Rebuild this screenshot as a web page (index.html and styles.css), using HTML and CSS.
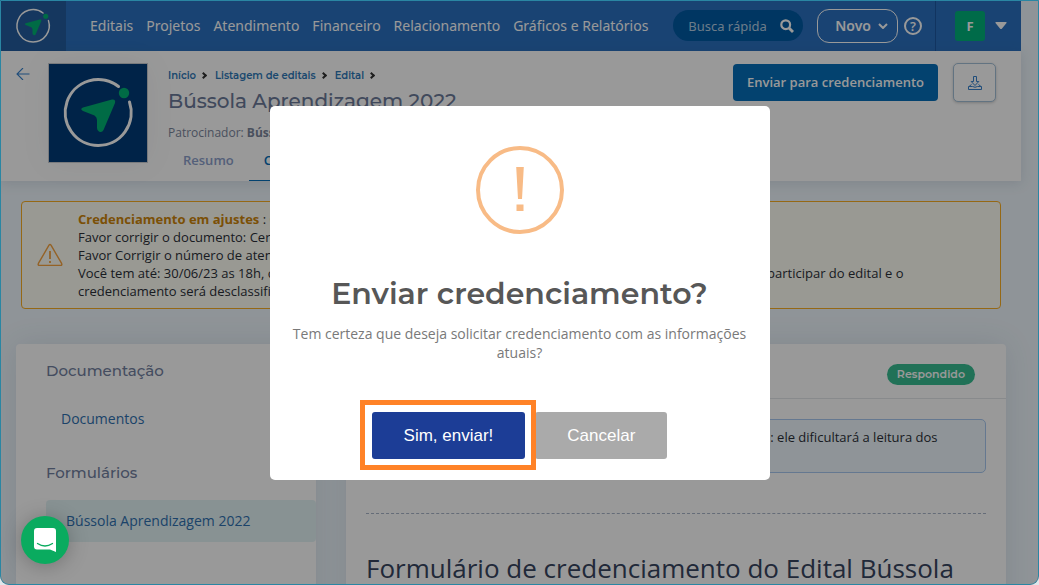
FILE: index.html
```
<!DOCTYPE html>
<html lang="pt-BR">
<head>
  <meta charset="UTF-8">
  <meta name="viewport" content="width=device-width, initial-scale=1">
  <title>Bússola Aprendizagem 2022</title>
  <link rel="stylesheet" href="styles.css">
</head>
<body>
  <!-- Shared logo -->
  <svg class="sprite" aria-hidden="true">
    <symbol id="logo" viewBox="0 0 98 98">
      <path d="M80.500 38A33 33 0 1 1 69.500 22.500" fill="none" stroke="#fff" stroke-width="3" stroke-linecap="round"/>
      <circle cx="75" cy="29" r="5.200" fill="#00b273"/>
      <path d="M34 43.500 63 35.500Q67 35 66 39L54.500 66Q53 69 50 67.500 48 66.500 48 64V56Q48 53 45.500 51.500L34 47Q30.500 45 34 43.500Z" fill="#00b273"/>
    </symbol>
  </svg>

  <div class="app">
    <!-- Navbar -->
    <nav class="navbar">
      <a href="#" class="brand" aria-label="Início"><svg width="48" height="48"><use href="#logo"/></svg></a>
      <div class="nav-links">
        <a href="#">Editais</a>
        <a href="#">Projetos</a>
        <a href="#">Atendimento</a>
        <a href="#">Financeiro</a>
        <a href="#">Relacionamento</a>
        <a href="#">Gráficos e Relatórios</a>
      </div>
      <div class="nav-tools">
        <div class="search">
          <input type="text" placeholder="Busca rápida" aria-label="Busca rápida">
          <svg width="14" height="14" viewBox="0 0 14 14" fill="none" stroke="#fff"><circle cx="5.700" cy="5.700" r="4.400" stroke-width="2.200"/><path d="M9 9l4 4" stroke-width="2.800"/></svg>
        </div>
        <button class="btn-new">Novo
          <svg width="10" height="6" viewBox="0 0 10 6" fill="none" stroke="#fff" stroke-width="2"><path d="M1 1l4 4 4-4"/></svg>
        </button>
        <button class="btn-help" aria-label="Ajuda">?</button>
      </div>
      <button class="user">
        <span class="avatar">F</span>
        <svg width="12" height="7" viewBox="0 0 12 7"><path d="M1 0h10q1 0 .5 1L7 6.500q-1 1-2 0L.5 1Q0 0 1 0z" fill="#fff"/></svg>
      </button>
    </nav>

    <!-- Page header -->
    <header class="page-header">
      <a href="#" class="back" aria-label="Voltar">
        <svg width="14" height="12" viewBox="0 0 14 12" fill="none" stroke="#3782cd" stroke-width="1.100"><path d="M13.500 6H1M7 0L1 6l6 6"/></svg>
      </a>
      <div class="cover"><svg width="98" height="98"><use href="#logo"/></svg></div>
      <div class="heading">
        <div class="breadcrumb">
          <a href="#">Início</a><i></i>
          <a href="#">Listagem de editais</a><i></i>
          <a href="#">Edital</a><i></i>
        </div>
        <h1>Bússola Aprendizagem 2022</h1>
        <p class="sponsor">Patrocinador: <b>Bússola Social</b></p>
        <div class="tabs">
          <a href="#">Resumo</a>
          <a href="#" class="active">Credenciamento</a>
        </div>
      </div>
      <div class="actions">
        <button class="btn-send">Enviar para credenciamento</button>
        <button class="btn-download" aria-label="Baixar">
          <svg width="14" height="14" viewBox="0 0 14 14" fill="none" stroke="#3782cd"><path d="M5.500.5h3v5h2.300L7 9.500 3.200 5.500h2.300zM3.500 8.500 1 10.500M10.500 8.500l2.500 2M.5 10.500h4q2.500 1.500 5 0h4v3H.5z"/></svg>
        </button>
      </div>
    </header>

    <!-- Alert -->
    <div class="alert">
      <svg width="26" height="24" viewBox="0 0 26 24" fill="none" stroke="#f7a440" stroke-width="1.400" stroke-linejoin="round"><path d="M12 2.200 1.400 20.400q-.8 2 1 2h21.200q1.800 0 1-2L14 2.200q-1-1.500-2 0z"/><path d="M13 8v8M13 18v2" stroke-width="1.800"/></svg>
      <div>
        <strong>Credenciamento em ajustes</strong> : <strong>Confira os itens</strong><br>
        Favor corrigir o documento: Certidão negativa<br>
        Favor Corrigir o número de atendidos<br>
        Você tem até: 30/06/23 as 18h, caso os seus ajustes não sejam prontos até a data limite prevista você não poderá participar do edital e o credenciamento será desclassificado.
      </div>
    </div>

    <!-- Columns -->
    <div class="columns">
      <aside class="card sidebar">
        <h2>Documentação</h2>
        <a href="#">Documentos</a>
        <h2>Formulários</h2>
        <a href="#" class="current">Bússola Aprendizagem 2022</a>
      </aside>
      <main class="card form-card">
        <div class="card-top"><span class="badge">Respondido</span></div>
        <div class="card-body">
          <div class="info">Evite escrever texto todo em letras maiúsculas, com CAPS LOCK : ele dificultará a leitura dos dados.</div>
          <hr>
          <h3>Formulário de credenciamento do Edital Bússola</h3>
        </div>
      </main>
    </div>

    <!-- Confirmation modal -->
    <div class="overlay">
      <div class="modal" role="dialog" aria-modal="true" aria-labelledby="modalTitle">
        <div class="modal-icon">
          <svg width="8" height="44" viewBox="0 0 8 44" fill="#f8bb86"><path d="M.2 0h7.600L6 32H2zM.5 37.500h7V44h-7z"/></svg>
        </div>
        <h2 id="modalTitle">Enviar credenciamento?</h2>
        <p>Tem certeza que deseja solicitar credenciamento com as informações atuais?</p>
        <div class="modal-buttons">
          <div class="highlight"><button class="btn-confirm">Sim, enviar!</button></div>
          <button class="btn-cancel">Cancelar</button>
        </div>
      </div>
    </div>

    <!-- Chat launcher -->
    <button class="chat" aria-label="Abrir chat">
      <svg width="22" height="24" viewBox="0 0 22 24"><path d="M3 0h16q3 0 3 3v21l-6-2.500H3q-3 0-3-3V3q0-3 3-3z" fill="#fff"/><path d="M3.500 15.500q7.500 5 15 0" fill="none" stroke="#0aab5f" stroke-width="1.300" stroke-linecap="round"/></svg>
    </button>
  </div>
</body>
</html>
```
FILE: styles.css
```
* {
  box-sizing: border-box;
}

body {
  margin: 0;
  background: #dfe6ea;
  font-family: 'Open Sans', sans-serif;
  font-size: 13px;
  color: #2b2f38;
}

a {
  color: inherit;
  text-decoration: none;
}

button {
  font-family: inherit;
  border: none;
  cursor: pointer;
}

h1, h2, h3, p {
  margin: 0;
}

svg {
  display: block;
  flex: none;
}

.sprite {
  position: absolute;
  width: 0;
  height: 0;
}

.app {
  position: relative;
  height: 100vh;
  padding-right: 18px;
  overflow: hidden;
  background: #eff7fd;
  border-radius: 0 0 9px 9px;
}

/* thin frame drawn over everything */
.app::after {
  content: '';
  position: absolute;
  inset: 0;
  border: 1px solid #2a86a3;
  border-radius: 0 0 9px 9px;
  pointer-events: none;
  z-index: 30;
}

/* Navbar */
.navbar {
  display: flex;
  align-items: center;
  height: 51px;
  background: #2b71c0;
  color: #fff;
}

.brand {
  display: flex;
  align-items: center;
  justify-content: center;
  width: 66px;
  height: 100%;
  background: #235d9f;
}

.nav-links {
  display: flex;
  gap: 13px;
  margin-left: 24px;
  font-family: 'Noto Sans', sans-serif;
  font-size: 14px;
  white-space: nowrap;
}

.nav-tools {
  display: flex;
  align-items: center;
  margin-left: auto;
}

.search {
  display: flex;
  align-items: center;
  width: 130px;
  height: 31px;
  padding: 0 9px 0 15px;
  background: #005aa3;
  border-radius: 16px;
}

.search input {
  flex: 1;
  min-width: 0;
  padding: 0;
  background: none;
  border: none;
  font-family: 'Noto Sans', sans-serif;
  font-size: 13px;
  color: #fff;
}

.search input::placeholder {
  color: #b4cee4;
}

.btn-new {
  display: flex;
  align-items: center;
  gap: 7px;
  height: 34px;
  margin: 0 6px 0 14px;
  padding: 0 9px 0 17px;
  background: none;
  border: 1px solid #fff;
  border-radius: 12px;
  font-family: 'Noto Sans', sans-serif;
  font-size: 14px;
  font-weight: 600;
  color: #fff;
}

.btn-help {
  width: 18px;
  height: 18px;
  padding: 0;
  background: none;
  border: 2px solid #fff;
  border-radius: 50%;
  font-size: 13px;
  font-weight: 600;
  line-height: 14px;
  color: #fff;
}

.user {
  display: flex;
  align-items: center;
  gap: 10px;
  height: 100%;
  margin-left: 13px;
  padding: 0 14px 0 19px;
  background: none;
  border-left: 1px solid #1d57a0;
}

.avatar {
  width: 30px;
  height: 30px;
  background: #00b27b;
  border-radius: 3px;
  font-size: 13px;
  font-weight: 700;
  line-height: 30px;
  color: #fff;
}

/* Page header */
.page-header {
  display: flex;
  height: 130px;
  padding: 12px 25px 0 16px;
  background: #fff;
  box-shadow: 0 2px 12px rgba(60, 80, 110, 0.15);
}

.back {
  padding-top: 5px;
}

.cover {
  width: 100px;
  height: 100px;
  margin-left: 18px;
  background: #003b78;
  border: 1px solid #c8ccd0;
  box-shadow: 0 0 30px rgba(60, 80, 110, 0.06);
}

.heading {
  display: flex;
  flex-direction: column;
  margin-left: 20px;
}

.breadcrumb {
  display: flex;
  align-items: center;
  height: 24px;
  font-family: Montserrat, Inter, sans-serif;
  font-size: 10px;
  font-weight: 600;
  color: #2e78b8;
}

.breadcrumb i {
  width: 5px;
  height: 5px;
  margin: 0 9px 0 5px;
  border: solid #333;
  border-width: 2px 2px 0 0;
  transform: rotate(45deg);
}

.heading h1 {
  font-family: Montserrat, Inter, sans-serif;
  font-size: 20px;
  font-weight: 500;
  line-height: 28px;
  color: #6c7a99;
}

.sponsor {
  margin-top: 9px;
  font-size: 12px;
  line-height: 18px;
  color: #7b869c;
}

.tabs {
  display: flex;
  margin-top: auto;
  font-size: 13px;
  font-weight: 600;
  color: #8ca0cb;
}

.tabs a {
  padding: 0 15px;
  height: 30px;
  line-height: 18px;
}

.tabs .active {
  color: #056eb9;
  border-bottom: 1px solid #056eb9;
}

.actions {
  display: flex;
  align-items: flex-start;
  gap: 15px;
  margin-left: auto;
}

.btn-send {
  height: 37px;
  margin-top: 1px;
  padding: 0 14px 1px;
  background: #056eb9;
  border-radius: 4px;
  font-size: 13px;
  font-weight: 600;
  color: #fff;
}

.btn-download {
  display: flex;
  align-items: center;
  justify-content: center;
  width: 43px;
  height: 39px;
  background: #fff;
  border: 1px solid #a3c0d8;
  border-radius: 5px;
  box-shadow: 0 1px 3px rgba(0, 0, 0, 0.2);
}

/* Alert */
.alert {
  display: flex;
  align-items: center;
  gap: 15px;
  height: 108px;
  margin: 20px 20px 0 21px;
  padding: 0 70px 0 15px;
  background: #fffff5;
  border: 1px solid #f9ae23;
  border-radius: 4px;
  line-height: 18px;
}

.alert strong {
  color: #ce850a;
}

/* Columns */
.columns {
  display: flex;
  align-items: flex-start;
  gap: 30px;
  margin: 35px 15px 0 16px;
}

.card {
  min-height: 300px;
  background: #fff;
  border-radius: 4px;
  box-shadow: 0 0 30px rgba(60, 80, 110, 0.12);
}

.sidebar {
  width: 300px;
  padding: 16px 0 0 30px;
  font-size: 14px;
  color: #2f71b0;
}

.sidebar h2 {
  font-family: Montserrat, Inter, sans-serif;
  font-size: 15px;
  font-weight: 500;
  line-height: 22px;
  color: #7280a0;
}

.sidebar a {
  display: block;
  margin: 16px 0 22px;
  padding: 0 15px;
  line-height: 42px;
}

.sidebar .current {
  padding: 0 20px;
  background: #e3f3f6;
  border-radius: 4px;
}

.form-card {
  flex: 1;
  min-width: 0;
}

.card-top {
  display: flex;
  justify-content: flex-end;
  height: 55px;
  padding: 20px 31px 0 0;
  border-bottom: 1px solid #e3e6ea;
}

.badge {
  height: 21px;
  padding: 0 10px;
  background: #38bd92;
  border-radius: 11px;
  font-family: Montserrat, Inter, sans-serif;
  font-size: 11px;
  font-weight: 600;
  line-height: 20px;
  color: #fff;
}

.card-body {
  padding: 20px;
}

.info {
  height: 54px;
  padding: 8px 30px 0 15px;
  background: #eff7fd;
  border: 1px solid #a8c8f0;
  border-radius: 5px;
  line-height: 18px;
}

.card-body hr {
  margin: 40px 0;
  border: none;
  border-top: 1px dashed #a8b5c8;
}

.card-body h3 {
  font-size: 26px;
  font-weight: 400;
  line-height: 28px;
  color: #374560;
}

/* Modal */
.overlay {
  position: absolute;
  inset: 0;
  display: flex;
  align-items: center;
  justify-content: center;
  background: rgba(0, 0, 0, 0.4);
  z-index: 10;
}

.modal {
  display: flex;
  flex-direction: column;
  align-items: center;
  width: 500px;
  padding: 40px 20px 21px;
  background: #fff;
  border-radius: 5px;
  text-align: center;
}

.modal-icon {
  display: flex;
  justify-content: center;
  width: 88px;
  height: 88px;
  padding-top: 17px;
  border: 4px solid #f8bb86;
  border-radius: 50%;
}

.modal h2 {
  margin-top: 40px;
  font-family: Montserrat, Inter, sans-serif;
  font-size: 30px;
  font-weight: 600;
  line-height: 40px;
  color: #575757;
}

.modal p {
  margin-top: 10px;
  font-size: 14px;
  font-weight: 400;
  line-height: 19px;
  color: #797979;
}

.modal-buttons {
  display: flex;
  gap: 10px;
  margin-top: 50px;
}

.modal-buttons button {
  height: 47px;
  padding: 2px 32px 0;
  border-radius: 3px;
  font-family: 'Liberation Sans', Arial, sans-serif;
  font-size: 17px;
  color: #fff;
}

.modal-buttons .btn-confirm {
  background: #1c3d96;
}

.modal-buttons .btn-cancel {
  background: #aaa;
}

.highlight {
  position: relative;
}

.highlight::after {
  content: '';
  position: absolute;
  inset: -12px -11px -11px -12px;
  border: 5px solid #ff8227;
  pointer-events: none;
  z-index: 1;
}

/* Chat launcher */
.chat {
  position: absolute;
  left: 21px;
  bottom: 21px;
  display: flex;
  align-items: center;
  justify-content: center;
  width: 48px;
  height: 48px;
  padding: 0;
  background: #0aab5f;
  border-radius: 50%;
  box-shadow: 0 2px 20px rgba(0, 0, 0, 0.25);
  z-index: 20;
}
```
